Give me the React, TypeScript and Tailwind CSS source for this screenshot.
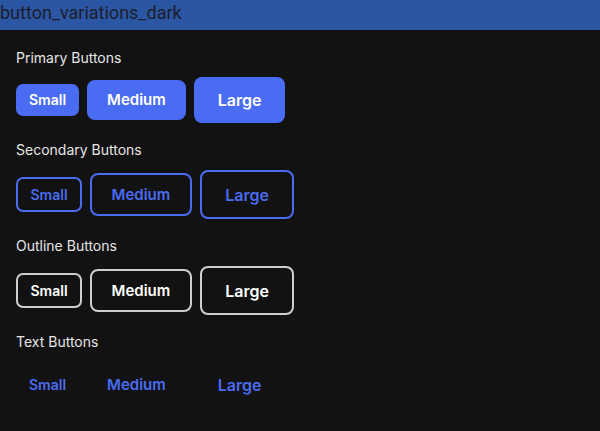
import React from "react";

type Variant = "primary" | "secondary" | "outline" | "text";

const sizeCls = {
  small: "px-[13px] py-[6px] text-[14px] leading-5 rounded-[7px]",
  medium: "px-5 py-[9px] text-[15px] leading-[22px] rounded-lg",
  large: "px-6 py-[11px] text-[16px] leading-6 rounded-lg",
};

const borderSizeCls = {
  small: "px-[12.5px] py-[5.5px] text-[14px] leading-5 rounded-[7px]",
  medium: "px-[19.5px] py-[8.5px] text-[15px] leading-[22px] rounded-lg",
  large: "px-[23.5px] py-[10.5px] text-[16px] leading-6 rounded-lg",
};

const variantCls: Record<Variant, string> = {
  primary: "bg-[#4a6cf2] text-white",
  secondary: "border-2 border-[#4a6cf2] text-[#4a6cf2] bg-transparent",
  outline: "border-2 border-[#cfcfcf] text-white bg-transparent",
  text: "bg-transparent text-[#4a6cf2]",
};

function Btn({ v, s, label }: { v: Variant; s: "small" | "medium" | "large"; label: string }) {
  const sz = v === "secondary" || v === "outline" ? borderSizeCls[s] : sizeCls[s];
  return (
    <button className={`${sz} ${variantCls[v]} font-semibold font-['Inter',sans-serif]`}>
      {label}
    </button>
  );
}

function Section({ title, v, first }: { title: string; v: Variant; first?: boolean }) {
  return (
    <div className="flex flex-col">
      <div className={`text-[14px] leading-5 text-[#e6e6e6] ${first ? "mb-[9px]" : "mb-[10px]"}`}>{title}</div>
      <div className="flex items-center gap-2">
        <Btn v={v} s="small" label="Small" />
        <Btn v={v} s="medium" label="Medium" />
        <Btn v={v} s="large" label="Large" />
      </div>
    </div>
  );
}

export default function App() {
  return (
    <div className="w-[600px] h-[431px] bg-[#121212] flex flex-col font-['Inter',sans-serif]">
      <div className="h-[30px] bg-[#2b56a4] text-[#1b1d2b] text-[18px] leading-[26px] shrink-0 font-['Roboto',sans-serif]">
        button_variations_dark
      </div>
      <div className="flex flex-col gap-[17px] pt-[18px] pl-4">
        <Section title="Primary Buttons" v="primary" first />
        <Section title="Secondary Buttons" v="secondary" />
        <Section title="Outline Buttons" v="outline" />
        <Section title="Text Buttons" v="text" />
      </div>
    </div>
  );
}
